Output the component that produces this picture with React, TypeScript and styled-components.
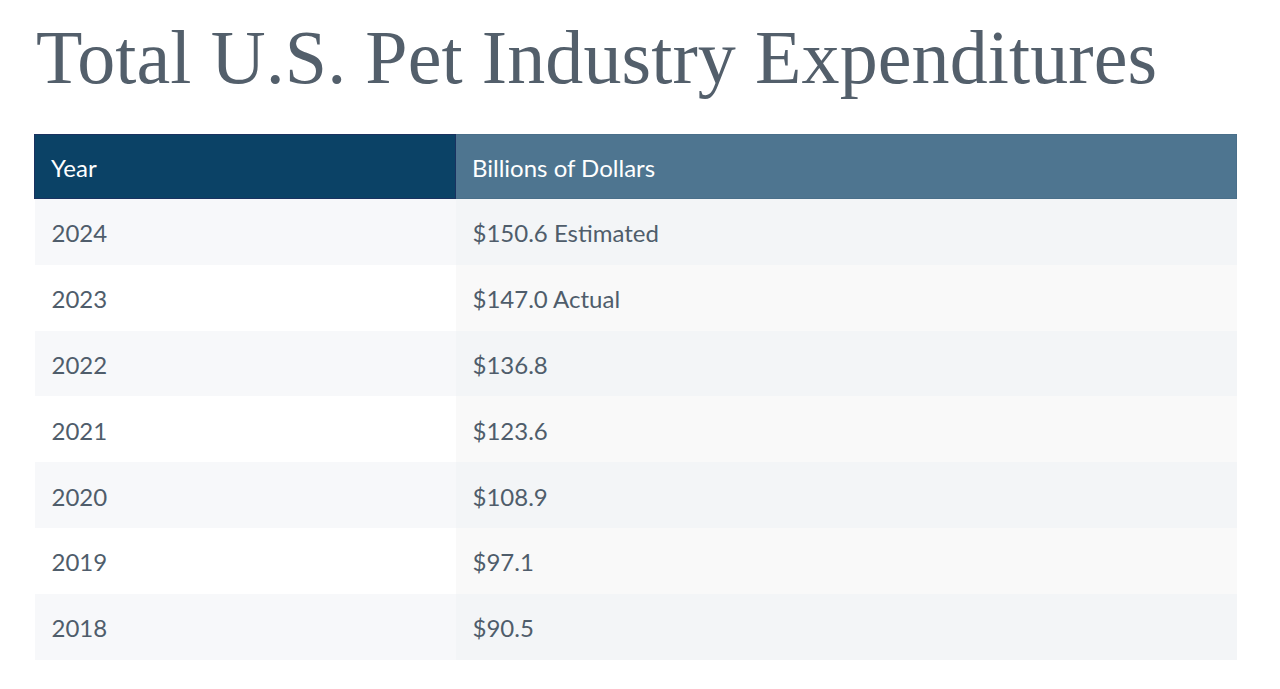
import React from "react";
import styled, { createGlobalStyle } from "styled-components";

const Global = createGlobalStyle`
  html, body { margin: 0; padding: 0; background: #ffffff; }
  body { font-family: Lato, "Open Sans", sans-serif; }
`;

const Page = styled.div`
  padding: 13px 43px 0 34px;
`;

const Title = styled.h1`
  margin: 0 0 0 2px;
  font-family: "Liberation Serif", "DejaVu Serif", serif;
  font-weight: 400;
  font-size: 76px;
  line-height: 88px;
  letter-spacing: 0.1px;
  color: #535f6b;
  white-space: nowrap;
`;

const Table = styled.table`
  margin-top: 33px;
  width: 1203px;
  border-collapse: collapse;
  table-layout: fixed;
  font-family: Lato, sans-serif;
  font-size: 24px;
`;

const HeadCell = styled.th<{ $second?: boolean }>`
  box-sizing: border-box;
  height: 64px;
  padding: 1px 16px 0;
  text-align: left;
  font-weight: 400;
  color: #ffffff;
  background: ${(p) => (p.$second ? "#4e7590" : "#0b4266")};
  border: 1px solid ${(p) => (p.$second ? "#4a6f8a" : "#1a3260")};
  width: ${(p) => (p.$second ? "auto" : "421px")};
`;

const Cell = styled.td<{ $second?: boolean; $odd?: boolean }>`
  height: 63.8px;
  padding: 2px 17px 0;
  color: #4f5d6b;
  background: ${(p) =>
    p.$odd
      ? p.$second
        ? "#f3f5f7"
        : "#f7f8fa"
      : p.$second
      ? "#f9f9f9"
      : "#ffffff"};
`;

const rows = [
  ["2024", "$150.6 Estimated"],
  ["2023", "$147.0 Actual"],
  ["2022", "$136.8"],
  ["2021", "$123.6"],
  ["2020", "$108.9"],
  ["2019", "$97.1"],
  ["2018", "$90.5"],
];

export default function App() {
  return (
    <Page>
      <Global />
      <Title>Total U.S. Pet Industry Expenditures</Title>
      <Table>
        <thead>
          <tr>
            <HeadCell>Year</HeadCell>
            <HeadCell $second>Billions of Dollars</HeadCell>
          </tr>
        </thead>
        <tbody>
          {rows.map(([y, v], i) => (
            <tr key={y}>
              <Cell $odd={i % 2 === 0}>{y}</Cell>
              <Cell $odd={i % 2 === 0} $second>
                {v}
              </Cell>
            </tr>
          ))}
        </tbody>
      </Table>
    </Page>
  );
}
